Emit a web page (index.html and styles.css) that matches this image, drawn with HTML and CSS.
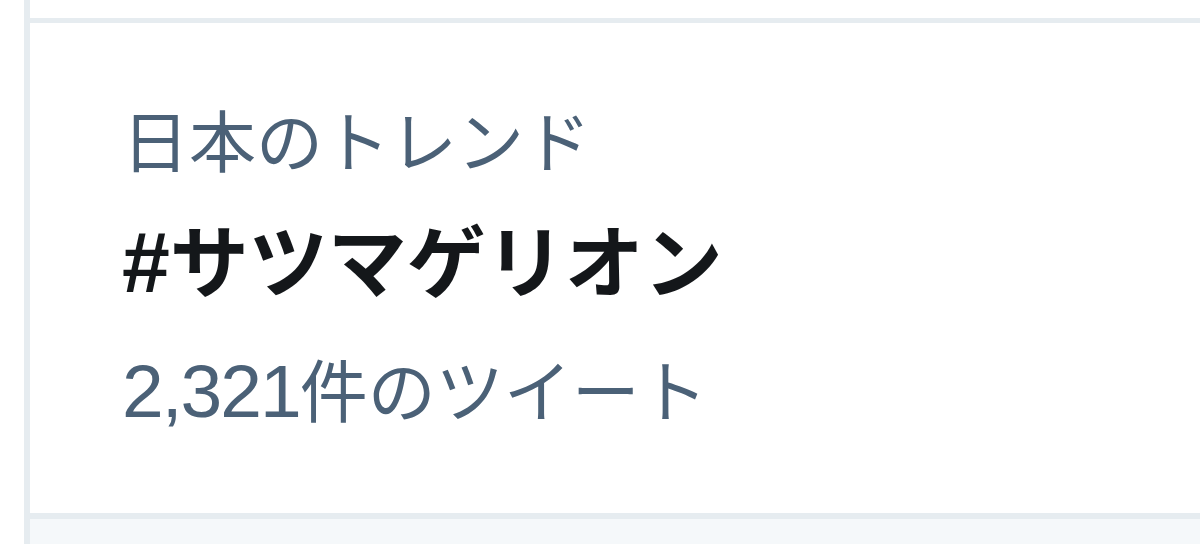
FILE: index.html
```html
<!DOCTYPE html>
<html lang="ja">
<head>
    <meta charset="UTF-8">
    <meta name="viewport" content="width=device-width, initial-scale=1.0">
    <title>日本のトレンド</title>
    <link rel="stylesheet" href="styles.css">
</head>
<body>
    <div class="timeline">
        <div class="prev-item"></div>
        <div class="trend-card">
            <div class="trend-place">日本のトレンド</div>
            <div class="trend-name"><span class="hash">#</span>サツマゲリオン</div>
            <div class="trend-count"><span class="count-num">2,321</span>件のツイート</div>
        </div>
        <div class="next-item"></div>
    </div>
</body>
</html>
```

FILE: styles.css
```css
body {
    margin: 0;
    background-color: #ffffff;
    font-family: "Liberation Sans", "Noto Sans CJK JP", sans-serif;
}

.timeline {
    margin-left: 24px;
    height: 544px;
    border-left: 6px solid #e6ecf0;
    display: flex;
    flex-direction: column;
    overflow: hidden;
}

.prev-item {
    height: 18px;
    background-color: #ffffff;
}

.trend-card {
    height: 490px;
    border-top: 5px solid #e6ecf0;
    border-bottom: 6px solid #e6ecf0;
    padding: 0 0 0 92px;
    background-color: #ffffff;
}

.trend-place {
    margin-top: 81px;
    font-size: 67px;
    line-height: 80px;
    color: #4b6177;
}

.trend-name {
    margin-top: 35px;
    font-size: 79px;
    line-height: 90px;
    font-weight: bold;
    color: #14171a;
}

.hash {
    font-size: 86px;
    line-height: 1;
}

.trend-count {
    margin-top: 43px;
    font-size: 68px;
    line-height: 80px;
    color: #4b6177;
}

.count-num {
    font-size: 75px;
    line-height: 1;
    letter-spacing: -2px;
}

.next-item {
    flex: 1;
    background-color: #f5f8fa;
}
```
